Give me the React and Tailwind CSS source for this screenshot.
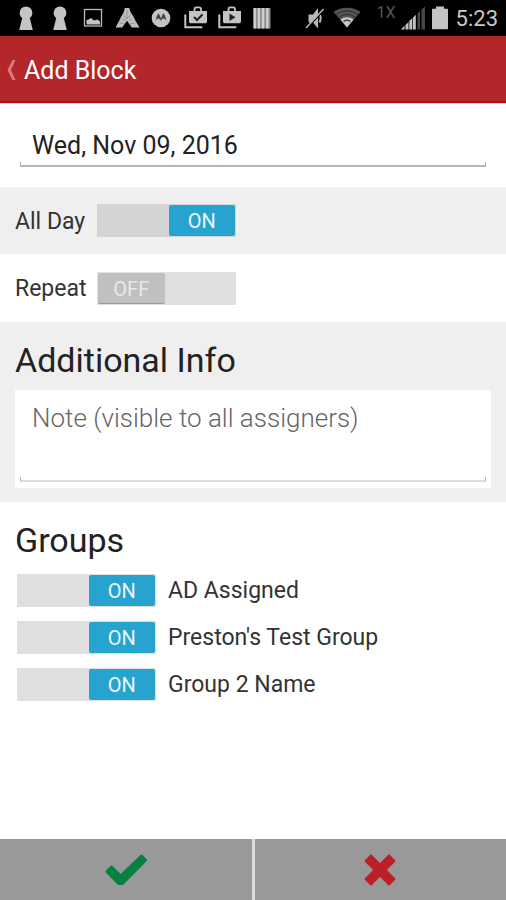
import React, { useState } from "react";

const KeyholeIcon = () => (
  <svg className="w-6 h-6" viewBox="0 0 24 24" fill="#c4c4c4" aria-hidden="true">
    <path d="M12 0.5a6.4 6.4 0 0 0-6.4 6.4c0 2.3 1.1 4 2.6 5L5.2 24h13.6l-3-12.1c1.5-1 2.6-2.7 2.6-5A6.4 6.4 0 0 0 12 .5z" />
  </svg>
);

const ImageIcon = () => (
  <svg className="w-6 h-6" viewBox="0 0 24 24" aria-hidden="true">
    <rect x="2.500" y="3.500" width="17" height="16.500" fill="none" stroke="#b8b8b8" strokeWidth="1.300" />
    <path d="M4.500 18.500v-4.500l2-.5 2.500-1.500 3 2.500 3.500-1 2.500 2v3z" fill="#c4c4c4" />
  </svg>
);

const TentIcon = () => (
  <svg className="w-6 h-6" viewBox="0 0 24 24" fill="#bdbdbd" aria-hidden="true">
    <path d="M8.800 2h4.400l1.600 4.500 2.600 4 2.200 4.500 4 6.500h-7.800L11 14.800l-4.800 6.700H-.6L3 15l2.200-4.500 2.400-4z" />
    <path d="M11 4v9M7.500 9.500l3.500 3 3.500-3M3.500 17l5 .8M19 17l-5 .8M6.500 12.500l2.500 2M15.500 12.500l-2.500 2" stroke="#7d7d7d" strokeWidth=".6" fill="none" />
  </svg>
);

const MotoIcon = () => (
  <svg className="w-6 h-6" viewBox="0 0 24 24" aria-hidden="true">
    <circle cx="11" cy="12" r="9.300" fill="#c4c4c4" />
    <path
      d="M5.500 15.300C6 12 7 9 8.500 7.200c1.200 1.600 2.100 3.700 2.500 5.800.4-2.100 1.300-4.200 2.500-5.800C15 9 16 12 16.500 15.300c-.7-1.800-1.700-2.800-2.800-2.800-1.200 0-2.200 1-2.700 2.600-.5-1.600-1.500-2.600-2.700-2.600-1.100 0-2.100 1-2.800 2.800z"
      fill="#444"
    />
  </svg>
);

const BagIcon = ({ children }) => (
  <svg className="w-6 h-6" viewBox="0 0 24 24" aria-hidden="true">
    <path d="M10.500 5.500V3.200C10.500 2 11.500 1.300 12.500 1.300H15c1 0 2 .7 2 1.900v2.300" fill="none" stroke="#c4c4c4" strokeWidth="1.800" />
    <path d="M5 5h18v10.500c0 1-.8 1.800-1.800 1.800H6.800c-1 0-1.800-.8-1.800-1.800z" fill="#c4c4c4" />
    <path d="M1.300 8.500v12.700h17" fill="none" stroke="#c4c4c4" strokeWidth="2" />
    {children}
  </svg>
);

const BarsIcon = () => (
  <svg className="w-6 h-6" viewBox="0 0 24 24" aria-hidden="true">
    <rect x="1.500" y="2" width="17" height="20.500" fill="#8c8c8c" />
    <path d="M2.700 2v20.500M6.900 2v20.500M11.100 2v20.500M15.300 2v20.500" stroke="#cfcfcf" strokeWidth="2.400" />
  </svg>
);

const MuteIcon = () => (
  <svg className="w-5 h-6" viewBox="0 0 20 24" aria-hidden="true">
    <path d="M3.500 8.500H8l5-6.500v20.500l-5-6H3.500z" fill="#b8b8b8" />
    <path d="M14.500 8c1.500 2 1.500 6 0 8.500" fill="none" stroke="#b8b8b8" strokeWidth="2" />
    <path d="M2 22.500L19 4" stroke="#000" strokeWidth="1.300" />
    <path d="M1 22L18.500 3" stroke="#b8b8b8" strokeWidth="1.500" />
  </svg>
);

const WifiIcon = () => (
  <svg className="w-7 h-6" viewBox="0 0 28 24" aria-hidden="true">
    <path d="M14 21L.5 6C8 .2 20 .2 27.500 6z" fill="#555" />
    <path d="M3 8.700c6-5 16-5 22 0M5.500 11.600c5-4 12-4 17 0" fill="none" stroke="#222" strokeWidth=".8" />
    <path d="M14 21.500l-6.500-7.700c3.500-3.300 9.500-3.300 13 0z" fill="#c8c8c8" />
    <path d="M10.500 15.500c2-1.500 5-1.500 7 0" fill="none" stroke="#444" strokeWidth="1.500" />
  </svg>
);

const SignalIcon = () => (
  <svg className="w-[26px] h-6" viewBox="0 0 26 24" aria-hidden="true">
    <path d="M1 23.500h3.500v-4zM5.500 19l3-3v7.500h-3zM9.300 15l3-3v11.500h-3zM13 11.500l2.800-2.800v14.800H13z" fill="#c4c4c4" />
    <path d="M17.500 7.300L20 5v18.500h-2.500zM21.500 3.500L25 .5v23h-3.500z" fill="#484848" />
  </svg>
);

const BatteryIcon = () => (
  <svg className="w-4 h-6" viewBox="0 0 16 24" fill="#c4c4c4" aria-hidden="true">
    <path d="M4 .5h8v2.300h3c.6 0 1 .4 1 1v18.400c0 .6-.4 1-1 1H1c-.6 0-1-.4-1-1V3.800c0-.6.400-1 1-1h3z" />
  </svg>
);

const StatusBar = () => (
  <div className="flex h-9 items-center justify-between bg-black pr-2 pl-3.5">
    <div className="flex items-center gap-[10px]">
      <KeyholeIcon />
      <KeyholeIcon />
      <ImageIcon />
      <TentIcon />
      <MotoIcon />
      <BagIcon>
        <path d="M10 11l3 3 5.500-5.500" fill="none" stroke="#222" strokeWidth="2" />
      </BagIcon>
      <BagIcon>
        <path d="M11.500 7.500l6 3.700-6 3.700z" fill="#222" />
      </BagIcon>
      <BarsIcon />
    </div>
    <div className="flex items-center">
      <MuteIcon />
      <span className="ml-2 flex">
        <WifiIcon />
      </span>
      <span className="mt-1 mr-1 ml-4 self-start text-base leading-4 text-[#555]">1X</span>
      <SignalIcon />
      <span className="mr-2 ml-1.5 flex">
        <BatteryIcon />
      </span>
      <span className="pt-0.5 text-[22px] leading-8 text-[#c8c8c8]">5:23</span>
    </div>
  </div>
);

const Toggle = ({ id, checked, onChange, dark }) => (
  <label
    htmlFor={id}
    className={`relative grid h-[33px] w-[139px] shrink-0 grid-cols-2 p-px ${
      dark ? "bg-[#d4d4d4]" : "bg-[#dfdfdf]"
    }`}
  >
    <input
      id={id}
      type="checkbox"
      className="absolute inset-0 appearance-none"
      checked={checked}
      onChange={(e) => onChange(e.target.checked)}
    />
    <span
      className={
        checked
          ? "col-start-2 ml-0.5 flex items-center justify-center rounded-xs bg-[#27a3d0] text-xl leading-5 text-[#e8f6fb]"
          : "col-start-1 mr-0.5 flex items-center justify-center rounded-xs border-b border-[#999] bg-[#c0c0c0] pt-0.5 text-xl leading-5 text-[#e8e8e8]"
      }
    >
      {checked ? "ON" : "OFF"}
    </span>
  </label>
);

const App = () => {
  const [date, setDate] = useState("Wed, Nov 09, 2016");
  const [allDay, setAllDay] = useState(true);
  const [repeat, setRepeat] = useState(false);
  const [note, setNote] = useState("");
  const [groups, setGroups] = useState([
    { id: "group-1", name: "AD Assigned", on: true },
    { id: "group-2", name: "Preston's Test Group", on: true },
    { id: "group-3", name: "Group 2 Name", on: true },
  ]);

  const toggleGroup = (id, on) => {
    setGroups(groups.map((group) => (group.id === id ? { ...group, on } : group)));
  };

  return (
    <div className="flex min-h-screen flex-col bg-white font-[Roboto,sans-serif] text-[#222]">
      <StatusBar />

      <header className="flex h-[67px] items-center border-b-2 border-[#b00d10] bg-[#b3262a] pt-1 pl-1.5">
        <button type="button" aria-label="Back" className="mr-2 flex">
          <svg className="h-6 w-2.5" viewBox="0 0 10 24" fill="#d97b7d" aria-hidden="true">
            <path d="M6.500 1H9.500L5 11l4.500 10H6.500L1.500 11z" />
          </svg>
        </button>
        <h1 className="text-[25px] leading-8 text-white">Add Block</h1>
      </header>

      <main className="flex-1">
        <section className="border-t border-[#ddd] px-5 pt-6 pb-5">
          <input
            type="text"
            aria-label="Date"
            className="block h-[34px] w-full px-3 text-[25px] leading-8 outline-none"
            value={date}
            onChange={(e) => setDate(e.target.value)}
          />
          <div className="h-[5px] border-x border-b-2 border-[#b5b5b5]" />
        </section>

        <section className="flex h-[67px] items-center gap-3 bg-[#efefef] px-[15px]">
          <label htmlFor="all-day" className="w-[70px] pt-0.5 text-[23px] leading-8 whitespace-nowrap text-[#333]">
            All Day
          </label>
          <Toggle id="all-day" checked={allDay} onChange={setAllDay} dark />
        </section>

        <section className="flex h-[68px] items-center gap-3 px-[15px]">
          <label htmlFor="repeat" className="w-[70px] pt-0.5 text-[23px] leading-8 whitespace-nowrap text-[#333]">
            Repeat
          </label>
          <Toggle id="repeat" checked={repeat} onChange={setRepeat} />
        </section>

        <section className="bg-[#efefef] px-[15px] pt-[18px] pb-3.5">
          <h2 className="text-[34px] leading-10">Additional Info</h2>
          <div className="mt-2.5 bg-white px-[5px] pt-2.5 pb-1.5">
            <textarea
              aria-label="Note"
              className="block h-[77px] w-full resize-none px-3 text-[26px] leading-9 font-light outline-none placeholder:text-[#666]"
              placeholder="Note (visible to all assigners)"
              value={note}
              onChange={(e) => setNote(e.target.value)}
            />
            <div className="h-[5px] border-x border-b-2 border-x-[#b5b5b5] border-b-[#dcdcdc]" />
          </div>
        </section>

        <section className="px-[15px] pt-[18px]">
          <h2 className="text-[34px] leading-10">Groups</h2>
          <ul className="mt-3.5 space-y-3.5 pl-0.5">
            {groups.map((group) => (
              <li key={group.id} className="flex h-[33px] items-center gap-3">
                <Toggle id={group.id} checked={group.on} onChange={(on) => toggleGroup(group.id, on)} />
                <label htmlFor={group.id} className="text-[23px] leading-8 text-[#333]">
                  {group.name}
                </label>
              </li>
            ))}
          </ul>
        </section>
      </main>

      <footer className="grid h-[61px] grid-cols-2 gap-[3px] bg-[#dcdcdc]">
        <button type="button" aria-label="Save" className="flex items-center justify-center bg-[#999]">
          <svg className="h-8 w-[42px]" viewBox="0 0 42 32" aria-hidden="true">
            <path
              d="M2 17.500L6.500 13l9 9L36.500 2 40.500 6.200 17.500 29.500H13.500z"
              fill="#078040"
              stroke="#078040"
              strokeWidth="3"
              strokeLinejoin="round"
            />
          </svg>
        </button>
        <button type="button" aria-label="Cancel" className="flex items-center justify-center bg-[#999]">
          <svg className="h-8 w-8" viewBox="0 0 32 32" aria-hidden="true">
            <path
              d="M7 1.500l9 9 9-9L30.500 7l-9 9 9 9-5.500 5.500-9-9-9 9L1.500 25l9-9-9-9z"
              fill="#ba2025"
              stroke="#ba2025"
              strokeWidth="2"
              strokeLinejoin="round"
            />
          </svg>
        </button>
      </footer>
    </div>
  );
};

export default App;
